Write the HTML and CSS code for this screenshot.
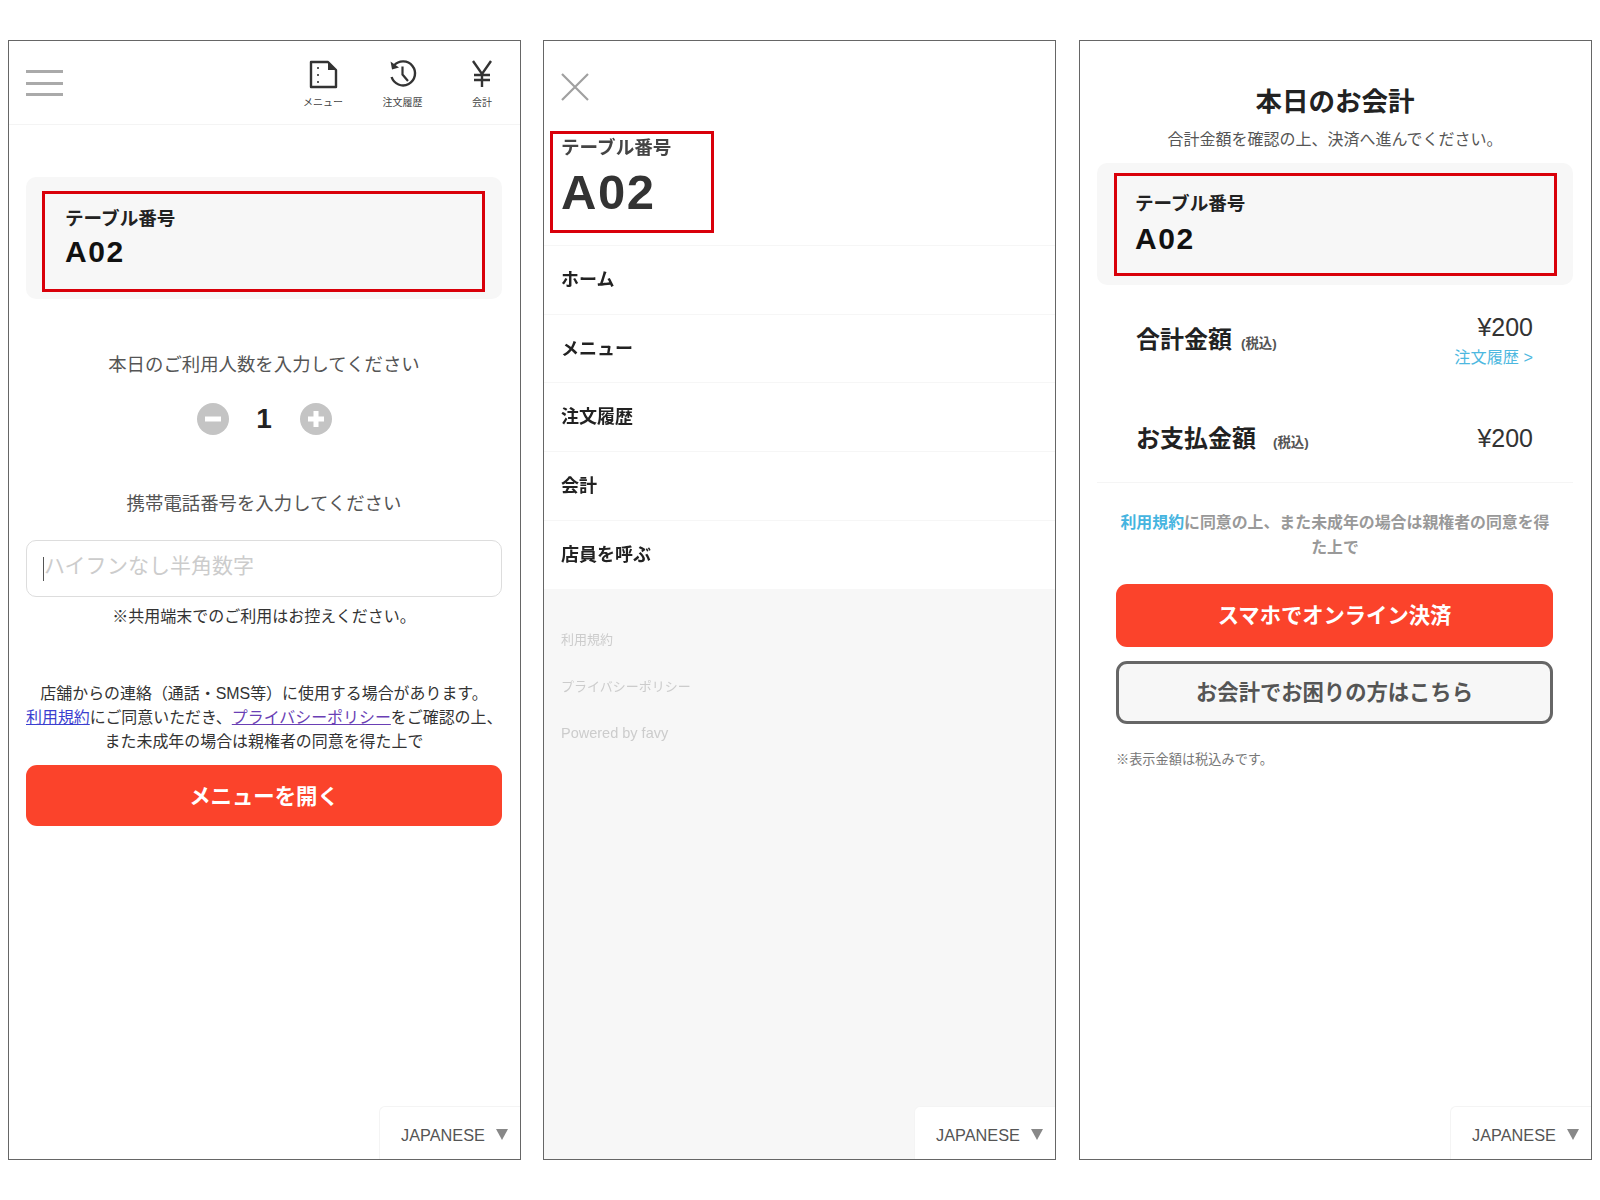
FILE: index.html
```html
<!DOCTYPE html>
<html lang="ja">
<head>
<meta charset="utf-8">
<title>テーブル番号</title>
<link rel="stylesheet" href="styles.css">
</head>
<body>
<div class="page">

  <section class="panel">
    <header class="topbar">
      <div class="burger"><span></span><span></span><span></span></div>
      <nav class="nav">
        <div class="nav-item">
          <svg class="nav-icon" viewBox="0 0 30 30" width="30" height="30"><path d="M3 3H20L28 11V28H3Z" fill="none" stroke="#333" stroke-width="2.4" stroke-linejoin="round"/><path d="M20 3L28 11H20Z" fill="#333"/><path d="M10 8v2M10 15v2M10 22v2" stroke="#333" stroke-width="1.6"/></svg>
          <span class="nav-label">メニュー</span>
        </div>
        <div class="nav-item">
          <svg class="nav-icon" viewBox="0 0 30 30" width="30" height="30"><path d="M6 6.5A12 12 0 1 1 3.6 18" fill="none" stroke="#333" stroke-width="2.4"/><path d="M2.5 2.5L4 10.5L11 8.5Z" fill="#333"/><path d="M14.5 7.5V15.5L20 22" fill="none" stroke="#333" stroke-width="2.2"/></svg>
          <span class="nav-label">注文履歴</span>
        </div>
        <div class="nav-item">
          <svg class="nav-icon" viewBox="0 0 30 30" width="30" height="30"><path d="M6 2L15 15L24 2M15 15V28M7 16H23M7 21H23" fill="none" stroke="#333" stroke-width="2.4"/></svg>
          <span class="nav-label">会計</span>
        </div>
      </nav>
    </header>
    <main class="entry">
      <div class="table-card">
        <div class="mark">
          <div class="table-label">テーブル番号</div>
          <div class="table-code">A02</div>
        </div>
      </div>
      <p class="prompt prompt-people">本日のご利用人数を入力してください</p>
      <div class="stepper">
        <svg viewBox="0 0 32 32" width="32" height="32"><circle cx="16" cy="16" r="16" fill="#c4c4c4"/><path d="M8 16H24" stroke="#fff" stroke-width="5"/></svg>
        <span class="count">1</span>
        <svg viewBox="0 0 32 32" width="32" height="32"><circle cx="16" cy="16" r="16" fill="#c4c4c4"/><path d="M8 16H24M16 8V24" stroke="#fff" stroke-width="5"/></svg>
      </div>
      <p class="prompt prompt-phone">携帯電話番号を入力してください</p>
      <div class="phone-input"><span class="caret"></span><span class="placeholder">ハイフンなし半角数字</span></div>
      <p class="shared-note">※共用端末でのご利用はお控えください。</p>
      <p class="consent">店舗からの連絡（通話・SMS等）に使用する場合があります。<br><a class="link-blue">利用規約</a>にご同意いただき、<a class="link-purple">プライバシーポリシー</a>をご確認の上、<br>また未成年の場合は親権者の同意を得た上で</p>
      <div class="btn btn-open">メニューを開く</div>
    </main>
    <div class="lang"><span>JAPANESE</span><i class="tri"></i></div>
  </section>

  <section class="panel">
    <div class="close">
      <svg viewBox="0 0 28 28" width="28" height="28"><path d="M1 1L27 27M27 1L1 27" stroke="#a0a0a0" stroke-width="2.2"/></svg>
    </div>
    <div class="mark mark-small">
      <div class="drawer-label">テーブル番号</div>
      <div class="drawer-code">A02</div>
    </div>
    <ul class="menu-list">
      <li>ホーム</li>
      <li>メニュー</li>
      <li>注文履歴</li>
      <li>会計</li>
      <li>店員を呼ぶ</li>
    </ul>
    <div class="drawer-foot">
      <div>利用規約</div>
      <div>プライバシーポリシー</div>
      <div class="powered">Powered by favy</div>
    </div>
    <div class="lang"><span>JAPANESE</span><i class="tri"></i></div>
  </section>

  <section class="panel panel-bill">
    <main class="bill">
      <h1 class="bill-title">本日のお会計</h1>
      <p class="bill-sub">合計金額を確認の上、決済へ進んでください。</p>
      <div class="table-card table-card-bill">
        <div class="mark">
          <div class="table-label">テーブル番号</div>
          <div class="table-code">A02</div>
        </div>
      </div>
      <div class="sum-row sum-total">
        <div class="sum-name">合計金額<small class="tax">(税込)</small></div>
        <div class="sum-side">
          <div class="sum-value">¥200</div>
          <div class="sum-link">注文履歴 &gt;</div>
        </div>
      </div>
      <div class="sum-row sum-pay">
        <div class="sum-name">お支払金額<small class="tax tax-wide">(税込)</small></div>
        <div class="sum-value">¥200</div>
      </div>
      <p class="terms"><a class="link-sky">利用規約</a>に同意の上、また未成年の場合は親権者の同意を得<br>た上で</p>
      <div class="actions">
        <div class="btn btn-pay">スマホでオンライン決済</div>
        <div class="btn btn-help">お会計でお困りの方はこちら</div>
        <p class="tax-note">※表示金額は税込みです。</p>
      </div>
    </main>
    <div class="lang"><span>JAPANESE</span><i class="tri"></i></div>
  </section>

</div>
</body>
</html>
```
FILE: styles.css
```css
* { box-sizing: border-box; }
html, body { margin: 0; background: #fff; }
body {
  font-family: "Liberation Sans", "Noto Sans CJK JP", sans-serif;
  color: #333;
}
p, h1, ul { margin: 0; padding: 0; }
.page {
  display: flex;
  gap: 22px;
  padding: 40px 0 0 8px;
  filter: blur(0.45px);
}
.panel {
  position: relative;
  display: flex;
  flex-direction: column;
  width: 513px;
  height: 1120px;
  border: 1px solid #666;
  background: #fff;
}
.panel-bill { margin-left: 1px; }

/* top bar */
.topbar {
  display: flex;
  justify-content: space-between;
  height: 84px;
  padding: 0 0 0 17px;
  border-bottom: 1px solid #f4f4f4;
}
.burger {
  display: flex;
  flex-direction: column;
  gap: 8.5px;
  width: 37px;
  padding-top: 29px;
}
.burger span { height: 3px; background: #aaa; }
.nav { display: flex; gap: 3.5px; }
.nav-item {
  display: flex;
  flex-direction: column;
  align-items: center;
  width: 76px;
  padding-top: 18px;
}
.nav-icon { display: block; }
.nav-label { margin-top: 8px; font-size: 10px; line-height: 12px; color: #444; }

/* table card */
.entry { display: flex; flex-direction: column; padding: 0 18px 0 17px; }
.table-card {
  margin-top: 52px;
  padding: 14px 17px 7px 16px;
  border-radius: 10px;
  background: #f7f7f7;
}
.mark {
  height: 101px;
  padding: 12px 0 0 20px;
  border: 3px solid #d9000a;
}
.table-label { font-size: 18.6px; line-height: 26px; font-weight: 700; color: #222; }
.table-code { margin-top: 2px; font-size: 30px; line-height: 36px; font-weight: 700; letter-spacing: 1.6px; color: #111; }

/* people and phone */
.prompt { font-size: 18.4px; line-height: 24px; text-align: center; color: #555; }
.prompt-people { margin-top: 54px; }
.stepper {
  display: flex;
  align-items: center;
  justify-content: center;
  height: 32px;
  margin-top: 26px;
}
.count { width: 71px; font-size: 28px; line-height: 32px; font-weight: 700; text-align: center; color: #222; }
.prompt-phone { margin-top: 57px; }
.phone-input {
  display: flex;
  align-items: center;
  height: 57px;
  margin-top: 24px;
  padding-left: 16px;
  border: 1px solid #ddd;
  border-radius: 10px;
}
.caret { width: 1px; height: 24px; background: #555; }
.placeholder { margin-bottom: 10px; font-size: 21px; color: #ccc; }
.shared-note { margin-top: 9px; font-size: 16px; line-height: 22px; text-align: center; color: #333; }
.consent { margin-top: 54px; font-size: 15.95px; line-height: 24px; text-align: center; color: #333; white-space: nowrap; }
.link-blue { color: #3b3fd0; text-decoration: underline; }
.link-purple { color: #6a3fb5; text-decoration: underline; }
.btn {
  display: flex;
  align-items: center;
  justify-content: center;
  border-radius: 11px;
  font-weight: 700;
}
.btn-open {
  height: 61px;
  margin-top: 11px;
  padding-bottom: 2px;
  background: #fb432b;
  color: #fff;
  font-size: 21.4px;
}

/* language tab */
.lang {
  position: absolute;
  right: 0;
  bottom: 0;
  display: flex;
  align-items: center;
  gap: 11px;
  width: 141px;
  height: 53px;
  padding: 4px 0 0 21px;
  border: 1px solid #f4f4f4;
  border-width: 1px 0 0 1px;
  border-radius: 6px 0 0 0;
  background: #fff;
  font-size: 16.3px;
  color: #555;
}
.tri {
  width: 0;
  height: 0;
  margin-top: -1px;
  border-style: solid;
  border-width: 11px 6px 0;
  border-color: #888 transparent transparent;
}

/* drawer */
.close { height: 90px; padding: 32px 0 0 17px; }
.close svg { display: block; }
.mark-small {
  flex: none;
  width: 164px;
  height: 102px;
  margin-left: 6px;
  padding: 0 0 0 8px;
}
.drawer-label { margin-top: 1px; font-size: 18.6px; line-height: 26px; font-weight: 700; color: #444; }
.drawer-code { margin-top: 2px; font-size: 49px; line-height: 58px; font-weight: 700; letter-spacing: 1.5px; color: #333; }
.menu-list { flex: none; margin-top: 12px; border-top: 1px solid #f6f6f6; list-style: none; }
.menu-list li {
  display: flex;
  align-items: center;
  height: 68.7px;
  padding: 0 0 4px 17px;
  border-bottom: 1px solid #f6f6f6;
  font-size: 18px;
  font-weight: 700;
  color: #222;
}
.menu-list li:last-child { border-bottom: 0; }
.drawer-foot {
  flex: 1;
  display: flex;
  flex-direction: column;
  gap: 28.5px;
  padding: 42px 0 0 17px;
  background: #f7f7f7;
  font-size: 13px;
  line-height: 18px;
  color: #ccc;
}
.powered { font-size: 14.5px; }

/* bill */
.bill { display: flex; flex-direction: column; padding: 0 18px 0 17px; }
.bill-title { margin-top: 43px; font-size: 26.5px; line-height: 36px; font-weight: 700; text-align: center; color: #222; }
.bill-sub { margin-top: 9px; font-size: 16px; line-height: 22px; text-align: center; color: #555; }
.table-card-bill { margin-top: 12px; padding: 10px 16px 9px 17px; }
.table-card-bill .mark { height: 103px; padding: 15px 0 0 18px; }
.table-card-bill .table-code { margin-top: 4px; }
.sum-row { display: flex; justify-content: space-between; align-items: center; padding: 0 40px 0 39px; }
.sum-total { height: 112px; padding-bottom: 3px; }
.sum-total .sum-name { margin-bottom: 5px; }
.sum-pay { height: 86px; padding-bottom: 4px; border-bottom: 1px solid #f5f5f5; }
.sum-pay .sum-name { margin-bottom: 2px; }
.sum-name { font-size: 24px; font-weight: 700; color: #222; white-space: nowrap; }
.tax { margin-left: 9px; font-size: 13.4px; font-weight: 700; color: #555; }
.tax-wide { margin-left: 17px; }
.sum-side { display: flex; flex-direction: column; align-items: flex-end; }
.sum-value { font-size: 25px; line-height: 30px; color: #333; }
.sum-link { margin-top: 4px; font-size: 16.2px; line-height: 22px; color: #4db8e0; }
.terms { margin-top: 27px; font-size: 15.9px; line-height: 25px; font-weight: 700; text-align: center; color: #999; white-space: nowrap; }
.link-sky { color: #45b4e0; }
.actions { display: flex; flex-direction: column; padding: 0 20px 0 19px; }
.btn-pay { height: 63px; margin-top: 24px; padding-bottom: 5px; background: #fb432b; color: #fff; font-size: 21.3px; }
.btn-help { height: 63px; margin-top: 14px; padding-bottom: 4px; border: 3px solid #666; background: #f7f7f7; color: #555; font-size: 21.3px; }
.tax-note { margin-top: 27px; font-size: 13.2px; line-height: 18px; color: #777; }
```
